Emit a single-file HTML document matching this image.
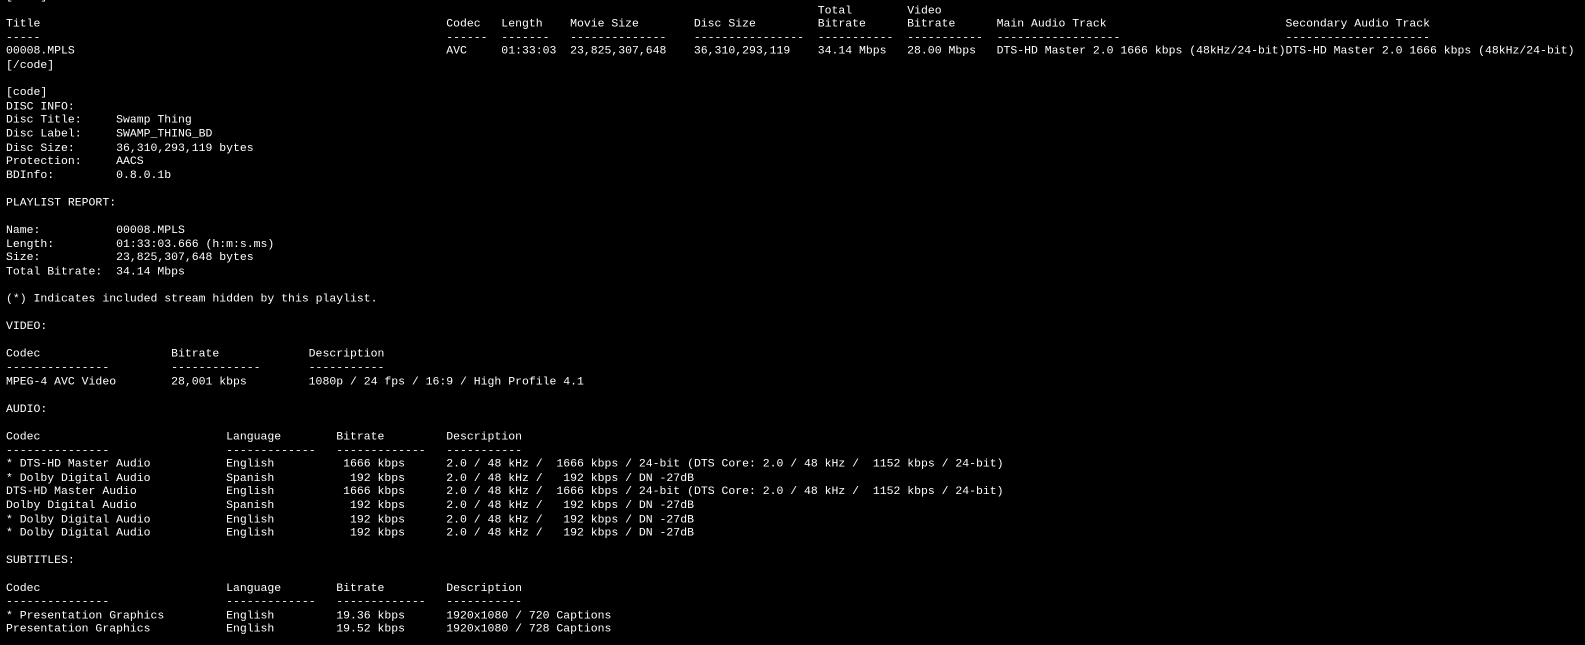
<!DOCTYPE html>
<html><head><meta charset="utf-8"><style>
html,body{margin:0;padding:0;background:#000;width:1585px;height:645px;overflow:hidden}
pre{margin:-9.4px 0 0 6px;font-family:"Liberation Mono",monospace;font-size:11.333px;line-height:13.6px;color:#fff;white-space:pre;transform:scale(1.012);transform-origin:0 0}
i{font-style:normal;display:inline-block;white-space:pre}
.w64{width:64ch}.w8{width:8ch}.w10{width:10ch}.w18{width:18ch}.w13{width:13ch}.w42{width:42ch}
.w24{width:24ch}.w20{width:20ch}.w32{width:32ch}.w16{width:16ch}.w118{width:118ch}
</style></head><body><pre>[code]
<i class="w118"></i><i class="w13">Total</i>Video
<i class="w64">Title</i><i class="w8">Codec</i><i class="w10">Length</i><i class="w18">Movie Size</i><i class="w18">Disc Size</i><i class="w13">Bitrate</i><i class="w13">Bitrate</i><i class="w42">Main Audio Track</i>Secondary Audio Track
<i class="w64">-----</i><i class="w8">------</i><i class="w10">-------</i><i class="w18">--------------</i><i class="w18">----------------</i><i class="w13">-----------</i><i class="w13">-----------</i><i class="w42">------------------</i>---------------------
<i class="w64">00008.MPLS</i><i class="w8">AVC</i><i class="w10">01:33:03</i><i class="w18">23,825,307,648</i><i class="w18">36,310,293,119</i><i class="w13">34.14 Mbps</i><i class="w13">28.00 Mbps</i><i class="w42">DTS-HD Master 2.0 1666 kbps (48kHz/24-bit)</i>DTS-HD Master 2.0 1666 kbps (48kHz/24-bit)
[/code]

[code]
DISC INFO:
Disc Title:     Swamp Thing
Disc Label:     SWAMP_THING_BD
Disc Size:      36,310,293,119 bytes
Protection:     AACS
BDInfo:         0.8.0.1b

PLAYLIST REPORT:

Name:           00008.MPLS
Length:         01:33:03.666 (h:m:s.ms)
Size:           23,825,307,648 bytes
Total Bitrate:  34.14 Mbps

(*) Indicates included stream hidden by this playlist.

VIDEO:

<i class="w24">Codec</i><i class="w20">Bitrate</i>Description
<i class="w24">---------------</i><i class="w20">-------------</i>-----------
<i class="w24">MPEG-4 AVC Video</i><i class="w20">28,001 kbps</i>1080p / 24 fps / 16:9 / High Profile 4.1

AUDIO:

<i class="w32">Codec</i><i class="w16">Language</i><i class="w16">Bitrate</i>Description
<i class="w32">---------------</i><i class="w16">-------------</i><i class="w16">-------------</i>-----------
<i class="w32">* DTS-HD Master Audio</i><i class="w16">English</i><i class="w16"> 1666 kbps</i>2.0 / 48 kHz /  1666 kbps / 24-bit (DTS Core: 2.0 / 48 kHz /  1152 kbps / 24-bit)
<i class="w32">* Dolby Digital Audio</i><i class="w16">Spanish</i><i class="w16">  192 kbps</i>2.0 / 48 kHz /   192 kbps / DN -27dB
<i class="w32">DTS-HD Master Audio</i><i class="w16">English</i><i class="w16"> 1666 kbps</i>2.0 / 48 kHz /  1666 kbps / 24-bit (DTS Core: 2.0 / 48 kHz /  1152 kbps / 24-bit)
<i class="w32">Dolby Digital Audio</i><i class="w16">Spanish</i><i class="w16">  192 kbps</i>2.0 / 48 kHz /   192 kbps / DN -27dB
<i class="w32">* Dolby Digital Audio</i><i class="w16">English</i><i class="w16">  192 kbps</i>2.0 / 48 kHz /   192 kbps / DN -27dB
<i class="w32">* Dolby Digital Audio</i><i class="w16">English</i><i class="w16">  192 kbps</i>2.0 / 48 kHz /   192 kbps / DN -27dB

SUBTITLES:

<i class="w32">Codec</i><i class="w16">Language</i><i class="w16">Bitrate</i>Description
<i class="w32">---------------</i><i class="w16">-------------</i><i class="w16">-------------</i>-----------
<i class="w32">* Presentation Graphics</i><i class="w16">English</i><i class="w16">19.36 kbps</i>1920x1080 / 720 Captions
<i class="w32">Presentation Graphics</i><i class="w16">English</i><i class="w16">19.52 kbps</i>1920x1080 / 728 Captions
</pre></body></html>
